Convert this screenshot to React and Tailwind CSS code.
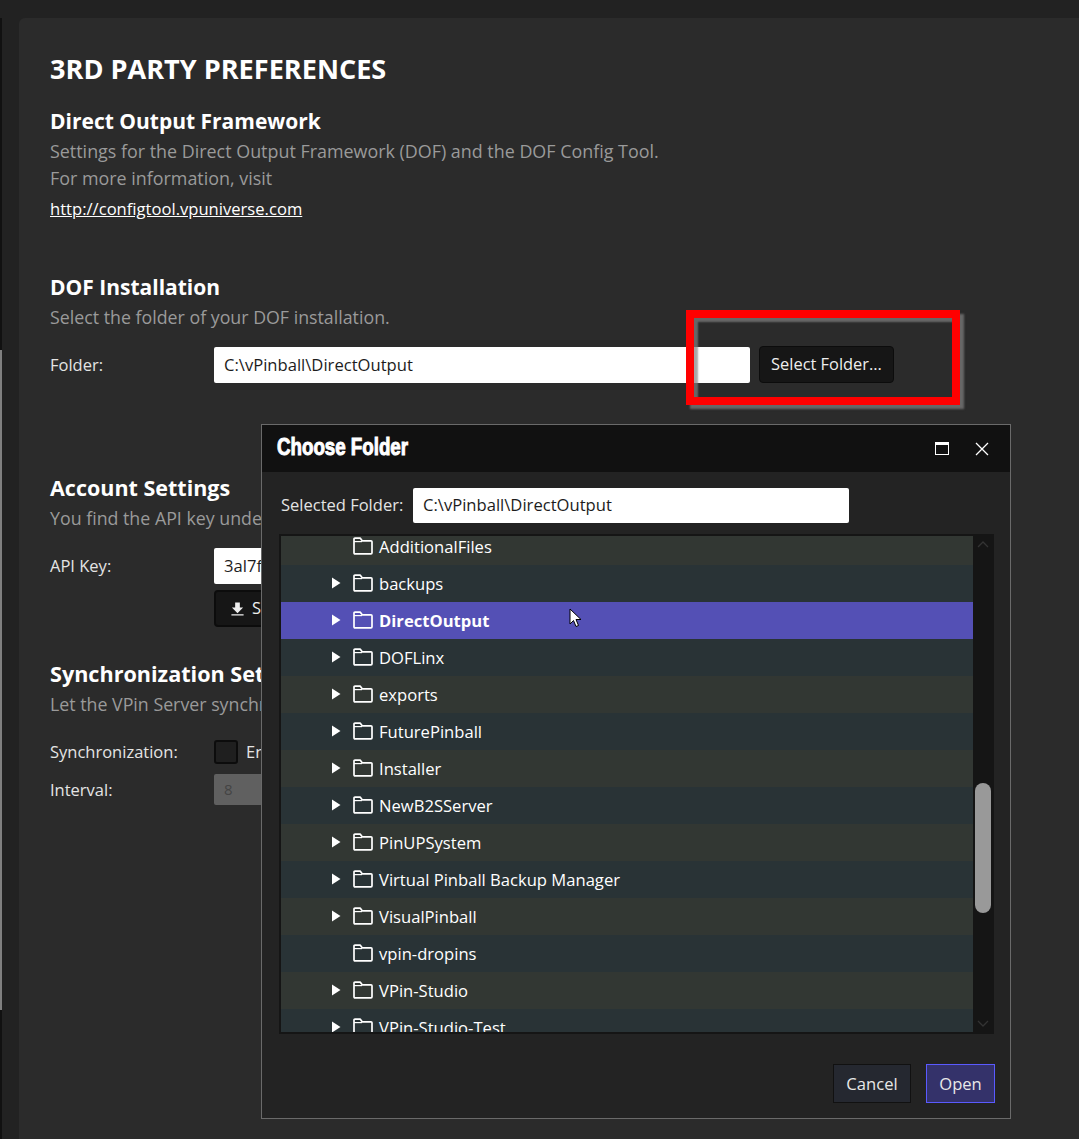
const folders = [
  { name: 'AdditionalFiles', leaf: true },
  { name: 'backups' },
  { name: 'DirectOutput', selected: true },
  { name: 'DOFLinx' },
  { name: 'exports' },
  { name: 'FuturePinball' },
  { name: 'Installer' },
  { name: 'NewB2SServer' },
  { name: 'PinUPSystem' },
  { name: 'Virtual Pinball Backup Manager' },
  { name: 'VisualPinball' },
  { name: 'vpin-dropins', leaf: true },
  { name: 'VPin-Studio' },
  { name: 'VPin-Studio-Test' },
];

function FolderIcon() {
  return (
    <svg className="-mt-[1px] h-[18px] w-[20px] shrink-0" viewBox="0 0 20 18" fill="none" stroke="currentColor" strokeWidth="1.7">
      <path d="M1 15.800V2.200q0-1 1-1h5.300l1.900 2.600H18q1 0 1 1v11q0 1-1 1H2q-1 0-1-1Z" strokeLinejoin="round" />
      <path d="M1 4.600h8" strokeWidth="1.200" />
    </svg>
  );
}

function Caret() {
  return (
    <svg className="-mt-[2px] h-[12px] w-[10px]" viewBox="0 0 10 12" fill="currentColor">
      <path d="M1 .5 9.500 6 1 11.500Z" />
    </svg>
  );
}

function FolderRow({ folder, index }) {
  let bg = index % 2 === 0 ? 'bg-[#323733]' : 'bg-[#293336]';
  if (folder.selected) bg = 'bg-[#5450b5]';
  return (
    <div className={`flex h-[37px] shrink-0 items-center pl-[50px] text-[16.6px] text-white ${bg} ${folder.selected ? 'font-bold' : ''}`}>
      <div className="flex w-[22px] items-center">{!folder.leaf && <Caret />}</div>
      <FolderIcon />
      <span className="ml-[6px] pt-[2px] whitespace-nowrap">{folder.name}</span>
    </div>
  );
}

function SettingsHeader({ title, text, className, titleClass = 'text-[21px]' }) {
  return (
    <div className={className}>
      <h2 className={`h-[30px] leading-[30px] font-bold whitespace-nowrap text-white ${titleClass}`}>{title}</h2>
      <p className="h-[30px] whitespace-nowrap text-[17.8px] leading-[30px] text-[#9a9a9a]">{text}</p>
    </div>
  );
}

function TextInput({ value, className }) {
  return (
    <div className={`flex items-center rounded-[2px] bg-white pl-[10px] text-[16.6px] text-[#1c1c1c] ${className}`}>{value}</div>
  );
}

function ChooseFolderDialog() {
  return (
    <div className="absolute top-[424px] left-[261px] flex h-[695px] w-[750px] flex-col border border-[#6a6a6a] bg-[#232323]">
      <div className="flex h-[47px] shrink-0 items-center justify-between bg-[#111111] pr-[21px] pl-[15px]">
        <span className="-mt-[3px] origin-left scale-x-[0.78] text-[24px] font-black whitespace-nowrap text-white [font-family:'Liberation_Sans_Narrow','Liberation_Sans',sans-serif] [-webkit-text-stroke:1px_white]">
          Choose Folder
        </span>
        <div className="flex items-center gap-[26px] text-white">
          <div className="h-[13px] w-[14px] border border-t-[3px] border-white" />
          <svg className="h-[14px] w-[14px]" viewBox="0 0 14 14" stroke="currentColor" strokeWidth="1.3">
            <path d="M1 1l12 12M13 1 1 13" />
          </svg>
        </div>
      </div>

      <div className="flex h-[62px] shrink-0 items-center pt-[5px] pl-[19px]">
        <span className="w-[132px] text-[16.5px] text-[#e4e4e4]">Selected Folder:</span>
        <TextInput value="C:\vPinball\DirectOutput" className="h-[35px] w-[436px]" />
      </div>

      <div className="mr-[16px] ml-[17px] flex h-[500px] shrink-0 overflow-hidden border-2 border-[#151515]">
        <div className="flex min-w-0 flex-1 flex-col overflow-hidden">
          <div className="-mt-[8px] flex flex-col">
            {folders.map((folder, i) => (
              <FolderRow key={folder.name} folder={folder} index={i} />
            ))}
          </div>
        </div>
        <div className="flex w-[19px] shrink-0 flex-col bg-[#151515] py-[4px]">
          <svg className="mx-auto h-[8px] w-[12px] text-[#333]" viewBox="0 0 12 8" fill="none" stroke="currentColor" strokeWidth="1.300">
            <path d="M1 7l5-5 5 5" />
          </svg>
          <div className="mx-auto mt-[235px] h-[130px] w-[16px] rounded-[8px] bg-[#999999]" />
          <svg className="mx-auto mt-auto h-[8px] w-[12px] text-[#333]" viewBox="0 0 12 8" fill="none" stroke="currentColor" strokeWidth="1.300">
            <path d="M1 1l5 5 5-5" />
          </svg>
        </div>
      </div>

      <div className="flex flex-1 items-start justify-end gap-[15px] pt-[30px] pr-[15px] text-[16.6px]">
        <button className="h-[39px] w-[78px] border border-[#111] bg-[#252830] pt-[2px] text-[#e8e8e8]">Cancel</button>
        <button className="h-[39px] w-[69px] border border-[#5a5aff] bg-[#34326a] pt-[2px] text-[#e8e8e8]">Open</button>
      </div>
    </div>
  );
}

export default function App() {
  return (
    <div className="relative flex h-[1139px] w-[1079px] overflow-hidden bg-[#222222] [font-family:'Open_Sans','Noto_Sans',sans-serif]">
      <div className="flex w-[19px] shrink-0 flex-col pt-[18px]">
        <div className="h-[332px] w-[2px] bg-[#111111]" />
        <div className="h-[660px] w-[2px] bg-[#808080]" />
        <div className="w-[2px] flex-1 bg-[#111111]" />
      </div>

      <main className="mt-[18px] flex-1 rounded-tl-[6px] bg-[#2b2b2b] pl-[31px]">
        <h1 className="mt-[33px] h-[36px] text-[27.100px] leading-[36px] font-bold text-white">3RD PARTY PREFERENCES</h1>

        <h2 className="mt-[19px] h-[30px] text-[21px] leading-[30px] font-bold text-white">Direct Output Framework</h2>
        <p className="h-[30px] text-[17.9px] leading-[30px] text-[#9a9a9a]">Settings for the Direct Output Framework (DOF) and the DOF Config Tool.</p>
        <p className="-mt-[3px] h-[30px] text-[17.9px] leading-[30px] text-[#9a9a9a]">For more information, visit</p>
        <a className="mt-[1px] block h-[30px] text-[16.6px] leading-[30px] text-white underline">http://configtool.vpuniverse.com</a>

        <SettingsHeader className="mt-[48px]" title="DOF Installation" text="Select the folder of your DOF installation." />
        <div className="mt-[14px] flex h-[37px] items-center">
          <span className="w-[164px] pt-[2px] text-[16.5px] text-[#e4e4e4]">Folder:</span>
          <TextInput value="C:\vPinball\DirectOutput" className="h-[36px] w-[536px] pt-[2px]" />
          <button className="ml-[9px] h-[37px] w-[135px] rounded-[4px] border border-[#0c0c0c] bg-[#161616] text-[16.4px] text-[#eeeeee]">Select Folder...</button>
        </div>

        <SettingsHeader className="mt-[90px]" titleClass="text-[21.5px]" title="Account Settings" text="You find the API key under your account settings." />
        <div className="mt-[14px] flex h-[37px] items-center">
          <span className="w-[164px] pt-[2px] text-[16.5px] text-[#e4e4e4]">API Key:</span>
          <TextInput value="3al7f" className="h-[36px] w-[536px] pt-[2px]" />
        </div>
        <button className="mt-[6px] ml-[164px] flex h-[37px] w-[135px] items-center gap-[7px] rounded-[4px] border-2 border-[#0c0c0c] bg-[#161616] pl-[14px] text-[16.4px] text-[#eeeeee]">
          <svg className="h-[16px] w-[15px]" viewBox="0 0 16 16" fill="currentColor">
            <path d="M5.500 1h5v5.500H14L8 12.500 2 6.500h3.500ZM1.500 13.500h13V15h-13Z" />
          </svg>
          Save
        </button>

        <SettingsHeader className="mt-[32px]" titleClass="text-[21.6px]" title="Synchronization Settings" text="Let the VPin Server synchronize your tables." />
        <div className="mt-[14px] flex h-[37px] items-center">
          <span className="w-[164px] pt-[2px] text-[16.5px] text-[#e4e4e4]">Synchronization:</span>
          <div className="h-[24px] w-[24px] rounded-[3px] border-2 border-[#0c0c0c] bg-[#1f1f1f]" />
          <span className="ml-[8px] pt-[2px] text-[16.5px] text-[#e4e4e4]">Enabled</span>
        </div>
        <div className="mt-[1px] flex h-[37px] items-center">
          <span className="w-[164px] pt-[2px] text-[16.5px] text-[#e4e4e4]">Interval:</span>
          <div className="flex h-[31px] w-[100px] items-center rounded-[2px] bg-[#606060] pl-[10px] text-[15px] text-[#444444]">8</div>
        </div>
      </main>

      <div className="pointer-events-none absolute top-[310px] left-[686px] h-[95px] w-[274px] border-[8px] border-[#ff0000] shadow-[4px_4px_2px_rgba(130,130,130,0.7),inset_4px_4px_2px_rgba(130,130,130,0.7)]" />

      <ChooseFolderDialog />

      <svg className="absolute top-[608px] left-[569px] h-[20px] w-[13px]" viewBox="0 0 13 20">
        <path d="M1 1v15l3.500-3.500 2.500 6 2.500-1-2.500-6h5Z" fill="#ffffff" stroke="#000000" strokeWidth="1" />
      </svg>
    </div>
  );
}
